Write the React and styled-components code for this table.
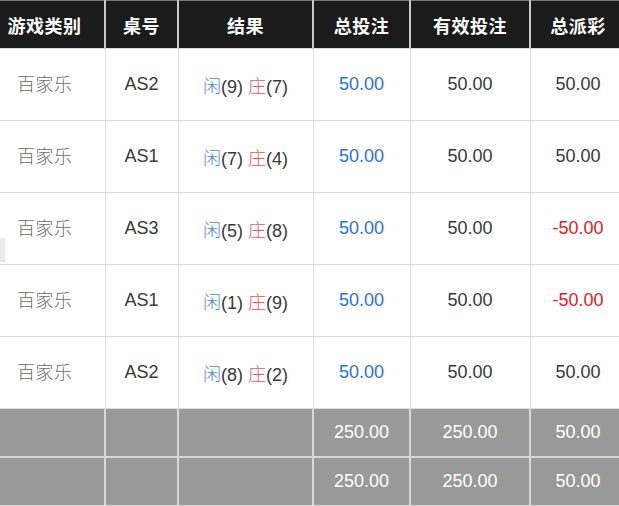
import React from "react";
import styled, { createGlobalStyle } from "styled-components";

const GlobalStyle = createGlobalStyle`
  html, body {
    margin: 0;
    padding: 0;
    background: #fff;
    overflow: hidden;
  }
  body {
    font-family: "Liberation Sans", "Noto Sans CJK SC", sans-serif;
  }
`;

const Page = styled.div`
  position: relative;
  width: 619px;
  height: 506px;
  overflow: hidden;
`;

const Table = styled.table`
  margin-left: -15px;
  border-collapse: collapse;
  table-layout: fixed;
  width: 641px;
`;

const HeadCell = styled.th`
  height: 47px;
  padding: 0;
  background: #1b1b1b;
  color: #fff;
  font-family: "Noto Sans CJK SC", sans-serif;
  font-weight: 700;
  font-size: 18px;
  letter-spacing: 0.5px;
  text-align: center;
  border-left: 2px solid #c8c8c8;
  border-right: 2px solid #c8c8c8;
  border-top: 1px solid #777;
  &:first-child {
    border-left: none;
  }
`;

const Cell = styled.td`
  height: 71px;
  padding: 0;
  text-align: center;
  font-size: 18px;
  color: ${(p) => p.$color || "#383838"};
  border: 1px solid #dcdcdc;
  &:first-child {
    border-left: none;
  }
`;

const GameCell = styled(Cell)`
  height: 67px;
  padding-bottom: 4px;
  font-family: "Noto Sans CJK SC", sans-serif;
  font-weight: 300;
  color: #6a6a6a;
  letter-spacing: 0.5px;
`;

const SumCell = styled.td`
  height: 47px;
  padding: 0;
  background: #999;
  color: #fff;
  text-align: center;
  font-size: 18px;
  border: 2px solid #d8d8d8;
  border-top-width: ${(p) => (p.$first ? "1px" : "2px")};
  &:first-child {
    border-left: none;
  }
`;

const Side = styled.span`
  font-family: "Noto Sans CJK SC", sans-serif;
  font-weight: 300;
  color: ${(p) => (p.$banker ? "#e8575a" : "#4f7fde")};
`;

const Edge = styled.div`
  position: absolute;
  left: 0;
  top: 238px;
  width: 5px;
  height: 22px;
  background: #ececec;
  border-bottom: 2px solid #e2e2e2;
`;

const rows = [
  { table: "AS2", p: 9, b: 7, payout: "50.00" },
  { table: "AS1", p: 7, b: 4, payout: "50.00" },
  { table: "AS3", p: 5, b: 8, payout: "-50.00" },
  { table: "AS1", p: 1, b: 9, payout: "-50.00" },
  { table: "AS2", p: 8, b: 2, payout: "50.00" },
];

const App = () => (
  <Page>
    <GlobalStyle />
    <Table>
      <colgroup>
        <col style={{ width: 120 }} />
        <col style={{ width: 73 }} />
        <col style={{ width: 135 }} />
        <col style={{ width: 97 }} />
        <col style={{ width: 120 }} />
        <col style={{ width: 96 }} />
      </colgroup>
      <thead>
        <tr>
          <HeadCell>游戏类别</HeadCell>
          <HeadCell>桌号</HeadCell>
          <HeadCell>结果</HeadCell>
          <HeadCell>总投注</HeadCell>
          <HeadCell>有效投注</HeadCell>
          <HeadCell>总派彩</HeadCell>
        </tr>
      </thead>
      <tbody>
        {rows.map((r, i) => (
          <tr key={i}>
            <GameCell>百家乐</GameCell>
            <Cell>{r.table}</Cell>
            <Cell>
              <Side>闲</Side>({r.p}) <Side $banker>庄</Side>({r.b})
            </Cell>
            <Cell $color="#2f6fd8">50.00</Cell>
            <Cell>50.00</Cell>
            <Cell $color={r.payout.startsWith("-") ? "#e0201f" : "#383838"}>
              {r.payout}
            </Cell>
          </tr>
        ))}
        {[0, 1].map((k) => (
          <tr key={"s" + k}>
            <SumCell $first={k === 0} />
            <SumCell $first={k === 0} />
            <SumCell $first={k === 0} />
            <SumCell $first={k === 0}>250.00</SumCell>
            <SumCell $first={k === 0}>250.00</SumCell>
            <SumCell $first={k === 0}>50.00</SumCell>
          </tr>
        ))}
      </tbody>
    </Table>
    <Edge />
  </Page>
);

export default App;
